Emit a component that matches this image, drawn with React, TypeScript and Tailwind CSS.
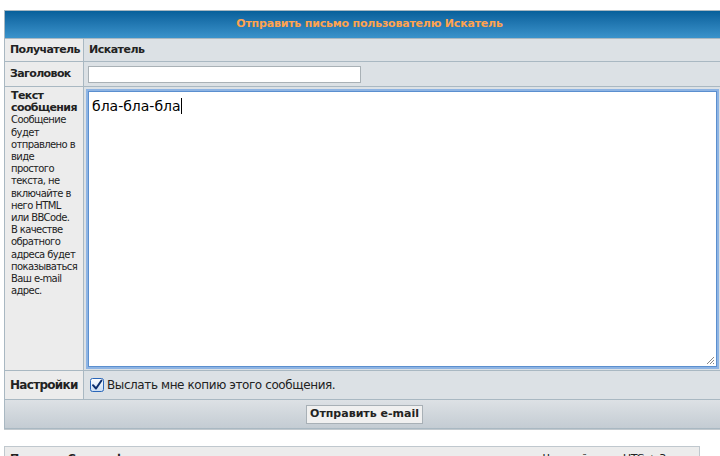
import React from "react";

const font = { fontFamily: '"DejaVu Sans", Verdana, sans-serif' };

function Check() {
  return (
    <svg width="14" height="14" viewBox="0 0 14 14" className="shrink-0">
      <defs>
        <linearGradient id="cb" x1="0" y1="0" x2="0" y2="1">
          <stop offset="0" stopColor="#ffffff" />
          <stop offset="1" stopColor="#c9dcf2" />
        </linearGradient>
      </defs>
      <rect x="0.5" y="0.5" width="13" height="13" rx="2" fill="url(#cb)" stroke="#2a66b8" />
      <path d="M3 7.2 L6 10.5 L11.5 2.5" fill="none" stroke="#0c2f6e" strokeWidth="2" strokeLinecap="round" strokeLinejoin="round" />
    </svg>
  );
}

export default function App() {
  return (
    <div className="w-[720px] h-[456px] overflow-hidden bg-white pt-[10px] pl-[4px] text-[#323d4f]" style={font}>
      <div className="w-[720px] bg-[#A9B8C2] p-px grid grid-cols-[78px_1fr] gap-px">
        <div className="col-span-2 h-[27px] bg-gradient-to-b from-[#06609b] to-[#3a93cb] flex items-center justify-center pl-[11px]">
          <span className="text-[11px] font-bold text-[#ffa34f] tracking-[-0.2px]">Отправить письмо пользователю Искатель</span>
        </div>

        <div className="h-[22px] bg-[#ECECEC] flex items-center pl-[5px]">
          <span className="text-[11px] font-bold text-[#222] tracking-[-0.6px]">Получатель</span>
        </div>
        <div className="h-[22px] bg-[#DCE1E5] flex items-center pl-[5px]">
          <span className="text-[11px] font-bold text-[#222] tracking-[-0.5px]">Искатель</span>
        </div>

        <div className="h-[24px] bg-[#ECECEC] flex items-center pl-[5px]">
          <span className="text-[11px] font-bold text-[#222] tracking-[-0.6px]">Заголовок</span>
        </div>
        <div className="h-[24px] bg-[#DCE1E5] flex items-center pl-[4px]">
          <div className="w-[273px] h-[17px] bg-white border border-[#a9b1b6]" />
        </div>

        <div className="h-[283px] bg-[#ECECEC] pl-[6px] pt-[3px] text-[#222] leading-[12.2px]">
          <div className="text-[11px] font-bold tracking-[-0.6px]">Текст<br />сообщения</div>
          <div className="text-[10px] tracking-[-0.6px]">
            Сообщение<br />будет<br />отправлено в<br />виде<br />простого<br />текста, не<br />включайте в<br />него HTML<br />или BBCode.<br />В качестве<br />обратного<br />адреса будет<br />показываться<br />Ваш e-mail<br />адрес.
          </div>
        </div>
        <div className="h-[283px] bg-[#DCE1E5] pl-[4px] pt-[4px] pr-[3px] pb-[2px]">
          <div className="relative w-[629px] h-[276px] bg-white border border-[#5b8fcf] ring-[2px] ring-[#8eb4e3] pl-[3px] pt-[2px]">
            <span className="text-[14px] text-black">бла-бла-бла</span>
            <span className="inline-block w-px h-[16px] bg-black align-[-3px]" />
            <svg width="9" height="9" viewBox="0 0 9 9" className="absolute right-[1px] bottom-[1px]">
              <path d="M8 1 L1 8 M8 4 L4 8 M8 7 L7 8" stroke="#888" strokeWidth="1" />
            </svg>
          </div>
        </div>

        <div className="h-[28px] bg-[#ECECEC] flex items-center pl-[5px]">
          <span className="text-[12px] font-bold text-[#222] tracking-[-0.7px]">Настройки</span>
        </div>
        <div className="h-[28px] bg-[#DCE1E5] flex items-center pl-[6px] gap-[3px]">
          <Check />
          <span className="text-[12px] text-[#222] tracking-[-0.4px]">Выслать мне копию этого сообщения.</span>
        </div>

        <div className="col-span-2 h-[28px] bg-gradient-to-b from-[#dde1e5] to-[#c4ccd3] flex items-center pl-[301px]">
          <button className="h-[19px] w-[117px] bg-[#f0f0f0] border border-[#a8b0b6] text-[11px] font-bold text-[#222] flex items-center justify-center">
            Отправить e-mail
          </button>
        </div>
      </div>
      <div className="h-px w-[720px] bg-[#c2c9ce]" />

      <div className="mt-[16px] w-[696px] h-[30px] bg-[#ECECEC] border border-[#c0c8ce] flex justify-between px-[5px] pt-[4px] text-[11px]">
        <span className="font-bold text-[#222] tracking-[-0.4px]">Портал » Список форумов</span>
        <span className="text-[#222] tracking-[-0.3px]">Часовой пояс: UTC + 3 часа</span>
      </div>
    </div>
  );
}
